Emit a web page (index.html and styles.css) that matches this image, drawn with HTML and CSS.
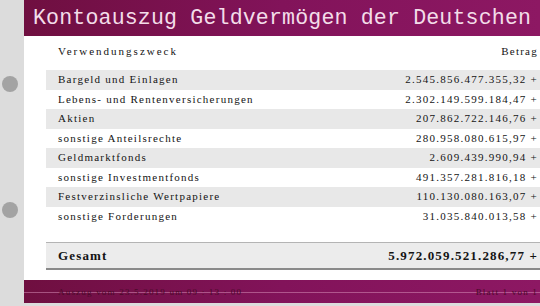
FILE: index.html
```html
<!DOCTYPE html>
<html lang="de">
<head>
<meta charset="utf-8">
<title>Kontoauszug</title>
<link rel="stylesheet" href="styles.css">
</head>
<body>
<div class="binder">
  <span class="hole"></span>
  <span class="hole"></span>
</div>
<div class="paper">
  <div class="header">Kontoauszug Geldvermögen der Deutschen</div>
  <div class="statement">
    <div class="head-row"><span class="head-label">Verwendungszweck</span><span>Betrag</span></div>
    <div class="rows">
      <div class="row alt"><span>Bargeld und Einlagen</span><span>2.545.856.477.355,32 +</span></div>
      <div class="row"><span>Lebens- und Rentenversicherungen</span><span>2.302.149.599.184,47 +</span></div>
      <div class="row alt"><span>Aktien</span><span>207.862.722.146,76 +</span></div>
      <div class="row"><span>sonstige Anteilsrechte</span><span>280.958.080.615,97 +</span></div>
      <div class="row alt"><span>Geldmarktfonds</span><span>2.609.439.990,94 +</span></div>
      <div class="row"><span>sonstige Investmentfonds</span><span>491.357.281.816,18 +</span></div>
      <div class="row alt"><span>Festverzinsliche Wertpapiere</span><span>110.130.080.163,07 +</span></div>
      <div class="row"><span>sonstige Forderungen</span><span>31.035.840.013,58 +</span></div>
    </div>
    <div class="total-row"><span>Gesamt</span><span>5.972.059.521.286,77 +</span></div>
  </div>
  <div class="footer"><span>Auszug vom 23.5.2019 um 09 : 13 : 00</span><span>Blatt 1 von 1</span></div>
</div>
</body>
</html>
```
FILE: styles.css
```css
html, body {
  margin: 0;
  padding: 0;
}
body {
  width: 540px;
  height: 306px;
  overflow: hidden;
  background: #dcdcdc;
  display: flex;
  align-items: flex-start;
  font-family: "Liberation Serif", "Times New Roman", serif;
}
.binder {
  width: 24px;
  flex: none;
  display: flex;
  flex-direction: column;
  align-items: center;
  padding-top: 76px;
  gap: 110px;
}
.hole {
  display: block;
  width: 16px;
  height: 16px;
  border-radius: 50%;
  background: #a3a3a3;
  margin-left: -4px;
}
.paper {
  flex: 1;
  height: 303px;
  background: #fff;
  display: flex;
  flex-direction: column;
}
.header {
  height: 36px;
  flex: none;
  background: linear-gradient(90deg, #6f0f40 0%, #82135a 50%, #8d1863 100%);
  color: #f3dde9;
  font-family: "Liberation Mono", "Courier New", monospace;
  font-size: 21.6px;
  letter-spacing: 0.15px;
  line-height: 37px;
  padding-left: 9px;
  white-space: nowrap;
  overflow: hidden;
}
.statement {
  margin-left: 22px;
  color: #141414;
  font-size: 11px;
  letter-spacing: 1.25px;
}
.head-row {
  display: flex;
  justify-content: space-between;
  height: 20px;
  line-height: 20px;
  margin-top: 5px;
  margin-bottom: 9px;
  padding: 0 2px 0 12px;
}
.head-label {
  letter-spacing: 2px;
}
.row {
  display: flex;
  justify-content: space-between;
  height: 19.5px;
  line-height: 19.5px;
  padding: 0 2px 0 12px;
}
.row.alt {
  background: #e8e8e8;
}
.total-row {
  display: flex;
  justify-content: space-between;
  margin-top: 16px;
  height: 25px;
  line-height: 25px;
  padding: 0 2px 0 12px;
  background: #ececec;
  border-top: 1px solid #b4b4b4;
  border-bottom: 2px solid #8a8a8a;
  font-weight: bold;
  font-size: 13px;
  letter-spacing: 1.15px;
}
.footer {
  margin-top: auto;
  height: 23px;
  flex: none;
  display: flex;
  justify-content: space-between;
  align-items: center;
  padding: 0 2px 0 34px;
  background:
    linear-gradient(180deg, transparent 12px, rgba(220, 150, 190, 0.5) 12px, rgba(220, 150, 190, 0.5) 13px, transparent 13px),
    linear-gradient(90deg, #6f0f40 0%, #82135a 50%, #8d1863 100%);
  color: #4a0a2a;
  font-size: 9px;
  letter-spacing: 1.2px;
  white-space: nowrap;
}
```
